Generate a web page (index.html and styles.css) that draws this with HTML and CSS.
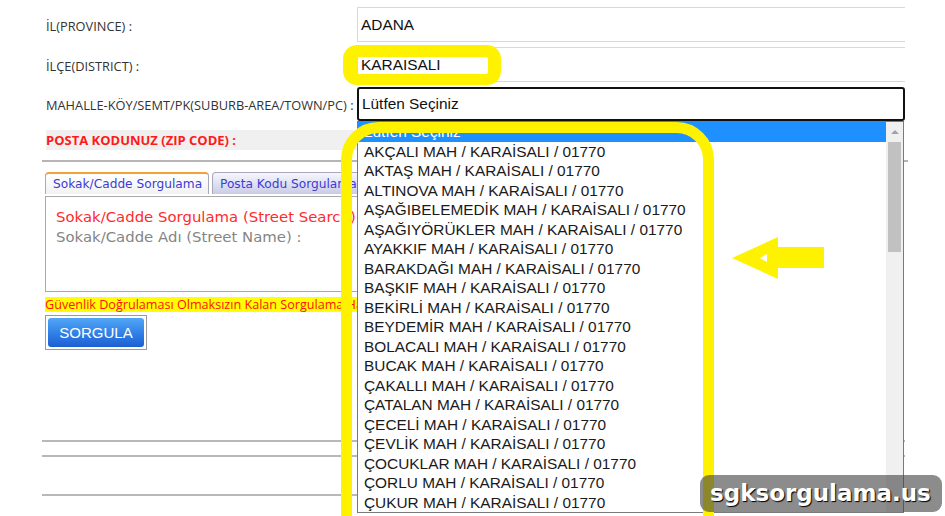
FILE: index.html
```html
<!DOCTYPE html>
<html lang="tr">
<head>
    <meta charset="UTF-8">
    <meta name="viewport" content="width=device-width, initial-scale=1.0">
    <title>Posta Kodu Sorgulama</title>
    <link rel="stylesheet" href="styles.css">
</head>
<body>
    <div class="sayfa">
        <div class="form">
            <div class="satir">
                <div class="etiket">İL(PROVINCE) :</div>
                <div class="alan"><div class="kutu">ADANA</div></div>
            </div>
            <div class="satir">
                <div class="etiket">İLÇE(DISTRICT) :</div>
                <div class="alan"><div class="kutu">KARAISALI</div></div>
            </div>
            <div class="satir satir-secim">
                <div class="etiket">MAHALLE-KÖY/SEMT/PK(SUBURB-AREA/TOWN/PC) :</div>
                <div class="alan"><div class="secim">Lütfen Seçiniz</div></div>
            </div>
            <div class="satir satir-zip">
                <div class="etiket zip">POSTA KODUNUZ (ZIP CODE) :</div>
                <div class="alan"></div>
            </div>
        </div>

        <div class="sorgu">
            <div class="sekmeler">
                <div class="sekme aktif">Sokak/Cadde Sorgulama</div>
                <div class="sekme">Posta Kodu Sorgulama</div>
            </div>
            <div class="panel">
                <div class="panel-baslik">Sokak/Cadde Sorgulama (Street Search)</div>
                <div class="panel-etiket">Sokak/Cadde Adı (Street Name) :</div>
            </div>
            <div class="uyari">Güvenlik Doğrulaması Olmaksızın Kalan Sorgulama Hakkınız</div>
            <div class="buton-kap"><button class="buton">SORGULA</button></div>
        </div>

        <div class="cizgi c1"></div>
        <div class="cizgi c2"></div>
        <div class="cizgi c3"></div>
    </div>

    <!-- acik secim listesi -->
    <div class="liste">
        <div class="secenekler">
            <div class="secenek secili">Lütfen Seçiniz</div>
            <div class="secenek">AKÇALI MAH / KARAİSALI / 01770</div>
            <div class="secenek">AKTAŞ MAH / KARAİSALI / 01770</div>
            <div class="secenek">ALTINOVA MAH / KARAİSALI / 01770</div>
            <div class="secenek">AŞAĞIBELEMEDİK MAH / KARAİSALI / 01770</div>
            <div class="secenek">AŞAĞIYÖRÜKLER MAH / KARAİSALI / 01770</div>
            <div class="secenek">AYAKKIF MAH / KARAİSALI / 01770</div>
            <div class="secenek">BARAKDAĞI MAH / KARAİSALI / 01770</div>
            <div class="secenek">BAŞKIF MAH / KARAİSALI / 01770</div>
            <div class="secenek">BEKİRLİ MAH / KARAİSALI / 01770</div>
            <div class="secenek">BEYDEMİR MAH / KARAİSALI / 01770</div>
            <div class="secenek">BOLACALI MAH / KARAİSALI / 01770</div>
            <div class="secenek">BUCAK MAH / KARAİSALI / 01770</div>
            <div class="secenek">ÇAKALLI MAH / KARAİSALI / 01770</div>
            <div class="secenek">ÇATALAN MAH / KARAİSALI / 01770</div>
            <div class="secenek">ÇECELİ MAH / KARAİSALI / 01770</div>
            <div class="secenek">ÇEVLİK MAH / KARAİSALI / 01770</div>
            <div class="secenek">ÇOCUKLAR MAH / KARAİSALI / 01770</div>
            <div class="secenek">ÇORLU MAH / KARAİSALI / 01770</div>
            <div class="secenek">ÇUKUR MAH / KARAİSALI / 01770</div>
        </div>
        <div class="kaydirma">
            <div class="ok-yukari"></div>
            <div class="tutamac"></div>
        </div>
    </div>

    <!-- sari isaretler -->
    <svg class="isaretler" width="945" height="516" viewBox="0 0 945 516">
        <path fill="#fff200" fill-rule="evenodd"
              d="M357 45 H487 A14 14 0 0 1 501 59 V71 A14 14 0 0 1 487 85 H357 A14 14 0 0 1 343 71 V59 A14 14 0 0 1 357 45 Z
                 M359 57 H486 A2 2 0 0 1 488 59 V72 A2 2 0 0 1 486 74 H359 A2 2 0 0 1 357 72 V59 A2 2 0 0 1 359 57 Z"/>
        <rect x="346.5" y="127.5" width="362" height="420" rx="32" fill="none" stroke="#fff200" stroke-width="11"/>
        <polygon fill="#fff200" points="732,258 778,237 778,247 824,247 824,268 778,268 778,279"/>
        <polygon fill="#fff" points="760,258 767,254 767,262"/>
    </svg>

    <div class="damga">sgksorgulama.us</div>
</body>
</html>
```

FILE: styles.css
```css
body {
    margin: 0;
    padding: 0;
    background: #fff;
    overflow: hidden;
    width: 945px;
    height: 516px;
}

.sayfa {
    padding: 5px 0 0 42px;
}

.form {
    width: 863px;
}

.satir {
    display: grid;
    grid-template-columns: 315px 1fr;
    height: 40px;
}

.etiket {
    font-family: "Open Sans", sans-serif;
    font-size: 12.8px;
    color: #333;
    padding-left: 4px;
    padding-top: 2px;
    display: flex;
    align-items: center;
    white-space: nowrap;
}

.alan {
    padding-top: 2px;
}

.kutu {
    height: 35px;
    box-sizing: border-box;
    border: 1px solid #d8d8d8;
    border-right: none;
    padding-left: 3px;
    font-family: "Liberation Sans", Arial, sans-serif;
    font-size: 15.4px;
    line-height: 33px;
    color: #111;
}

.satir-secim {
    height: 37px;
}

.secim {
    height: 34px;
    box-sizing: border-box;
    border: 2px solid #111;
    border-radius: 3px;
    padding-left: 3px;
    font-family: "Liberation Sans", Arial, sans-serif;
    font-size: 15.4px;
    line-height: 30px;
    color: #111;
}

.satir-zip {
    height: 20px;
    margin-top: 8px;
}

.etiket.zip {
    margin-left: 4px;
    padding-left: 0;
    padding-top: 0;
    background: #f0f0f0;
    color: #ff1a1a;
    font-weight: bold;
    font-size: 13px;
}

.sorgu {
    border-top: 2px solid #b5b5b5;
    margin-top: 10px;
    padding: 10px 0 0 3px;
    width: 863px;
}

.sekmeler {
    display: flex;
    gap: 3px;
    height: 23px;
}

.sekme {
    font-family: "DejaVu Sans", Verdana, sans-serif;
    font-size: 12.2px;
    color: #3b3bd6;
    height: 22px;
    line-height: 22px;
    padding: 0 7px 0 7px;
    border: 1px solid #a8a8b8;
    border-bottom: none;
    border-radius: 4px 4px 0 0;
    background: linear-gradient(#f6f6fc, #c9cce6);
    box-sizing: border-box;
    white-space: nowrap;
}

.sekme.aktif {
    width: 164px;
    border-top: 2px solid #f2a23a;
    background: linear-gradient(#ffffff, #f2f2f2);
    line-height: 20px;
}

.panel {
    margin-top: 1px;
    width: 520px;
    height: 96px;
    box-sizing: border-box;
    border: 1px solid #a9a9a9;
    padding: 10px 10px;
    font-family: "DejaVu Sans", Verdana, sans-serif;
    font-size: 14.9px;
    line-height: 20px;
}

.panel-baslik {
    color: #ff2b2b;
}

.panel-etiket {
    color: #858585;
}

.uyari {
    margin-top: 5px;
    width: 313px;
    height: 15px;
    background: #ffff00;
    color: #ff1010;
    font-family: "Open Sans", sans-serif;
    font-size: 12.6px;
    line-height: 15px;
    white-space: nowrap;
    overflow: hidden;
}

.buton-kap {
    margin-top: 3px;
    width: 102px;
    height: 35px;
    box-sizing: border-box;
    border: 1px solid #9a9a9a;
    padding: 2px;
}

.buton {
    width: 100%;
    height: 100%;
    border: none;
    border-radius: 3px;
    background: linear-gradient(#52a6f6, #2f7fe6 55%, #1d5fd2);
    color: #fff;
    font-family: "Liberation Sans", Arial, sans-serif;
    font-size: 15px;
    padding: 0;
}

.cizgi {
    width: 863px;
    border-top: 2px solid #b8b8b8;
}

.c1 {
    margin-top: 90px;
}

.c2 {
    margin-top: 13px;
}

.c3 {
    margin-top: 37px;
}

.liste {
    position: absolute;
    left: 357px;
    top: 121px;
    width: 547px;
    height: 392px;
    box-sizing: border-box;
    border: 1px solid #7a7a7a;
    background: #fff;
    display: flex;
}

.secenekler {
    flex: 1;
    overflow: hidden;
}

.secenek {
    height: 19.5px;
    line-height: 19.5px;
    padding-left: 6px;
    font-family: "Liberation Sans", Arial, sans-serif;
    font-size: 15.4px;
    color: #1a1a1a;
    white-space: nowrap;
}

.secenek.secili {
    background: #1e90ff;
    color: #fff;
}

.kaydirma {
    width: 17px;
    background: #f0f0f0;
    position: relative;
}

.ok-yukari {
    position: absolute;
    left: 5px;
    top: 8px;
    width: 0;
    height: 0;
    border-left: 4px solid transparent;
    border-right: 4px solid transparent;
    border-bottom: 4px solid #a3a3a3;
}

.tutamac {
    position: absolute;
    left: 2px;
    top: 20px;
    width: 13px;
    height: 110px;
    background: #c1c1c1;
}

.isaretler {
    position: absolute;
    left: 0;
    top: 0;
    pointer-events: none;
}

.damga {
    position: absolute;
    left: 700px;
    top: 475px;
    width: 242px;
    height: 37px;
    box-sizing: border-box;
    border-radius: 9px;
    background: rgba(70, 70, 70, 0.62);
    color: #fff;
    font-family: "DejaVu Sans", Verdana, sans-serif;
    font-weight: bold;
    font-size: 23px;
    line-height: 37px;
    padding-left: 10px;
    text-shadow: 1px 1px 1px #000;
    white-space: nowrap;
}
```
